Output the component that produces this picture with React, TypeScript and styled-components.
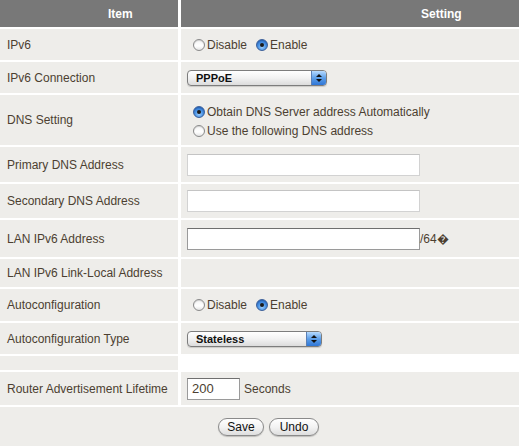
import React, { useState } from 'react';
import styled, { createGlobalStyle } from 'styled-components';

const GlobalStyle = createGlobalStyle`
  html, body {
    margin: 0;
    padding: 0;
    background: #fff;
  }
  body {
    font-family: "Liberation Sans", Arial, sans-serif;
    font-size: 12px;
    color: #4c3f31;
  }
`;

const Table = styled.div`
  display: grid;
  grid-template-columns: 178px 1fr;
  column-gap: 3px;
  row-gap: 2px;
  width: 519px;
  height: 446px;
  overflow: hidden;
  background: #fff;
`;

const HeadCell = styled.div<{ $pad: number }>`
  height: 27px;
  background: #787878;
  color: #fff;
  font-weight: bold;
  font-size: 12px;
  display: flex;
  align-items: center;
  padding-left: ${(p) => p.$pad}px;
`;

const Label = styled.div<{ $h: number }>`
  height: ${(p) => p.$h}px;
  background: #eeedea;
  display: flex;
  align-items: center;
  padding-left: 7px;
  white-space: nowrap;
`;

const Value = styled.div<{ $h: number; $blank?: boolean }>`
  height: ${(p) => p.$h}px;
  background: ${(p) => (p.$blank ? '#fff' : '#eeedea')};
  display: flex;
  align-items: center;
  padding-left: 6px;
  white-space: nowrap;
`;

const Stack = styled.div`
  display: flex;
  flex-direction: column;
  gap: 5px;
  margin-top: 2px;
`;

const RadioLabel = styled.label`
  display: inline-flex;
  align-items: center;
  margin-left: 6px;
  margin-right: 3px;
  cursor: default;
`;

const RadioDot = styled.span<{ $on: boolean }>`
  width: 12px;
  height: 12px;
  border-radius: 50%;
  box-sizing: border-box;
  margin-right: 2px;
  position: relative;
  border: 1px solid ${(p) => (p.$on ? '#3a5f9a' : '#8a8a8a')};
  background: ${(p) =>
    p.$on
      ? 'radial-gradient(circle at 50% 70%, #9fd0ff 0%, #4a93e4 45%, #1c5cc0 100%)'
      : 'linear-gradient(#f4f4f4, #ffffff 60%, #e4e4e4)'};
  box-shadow: inset 0 1px 1px rgba(0, 0, 0, 0.15);

  &::after {
    content: '';
    display: ${(p) => (p.$on ? 'block' : 'none')};
    position: absolute;
    left: 50%;
    top: 50%;
    width: 4px;
    height: 4px;
    margin: -2px 0 0 -2px;
    border-radius: 50%;
    background: #1a1a1a;
  }
`;

const Popup = styled.div<{ $w: number }>`
  width: ${(p) => p.$w}px;
  height: 16px;
  box-sizing: border-box;
  border: 1px solid #7d7d7d;
  border-radius: 4px;
  background: linear-gradient(#ffffff, #f2f2f2 50%, #dcdcdc);
  display: flex;
  align-items: center;
  overflow: hidden;
  box-shadow: 0 1px 1px rgba(0, 0, 0, 0.15);
`;

const PopupText = styled.span`
  flex: 1;
  padding-left: 8px;
  font-size: 11px;
  font-weight: bold;
  color: #111;
`;

const PopupCap = styled.span`
  width: 14px;
  height: 100%;
  border-left: 1px solid #5a7fb5;
  background: linear-gradient(#b7dbff, #5c9ee8 50%, #2f76d6);
  display: flex;
  flex-direction: column;
  align-items: center;
  justify-content: center;
  gap: 2px;
`;

const TextInput = styled.input<{ $w: number; $dark?: boolean }>`
  width: ${(p) => p.$w}px;
  height: 22px;
  box-sizing: border-box;
  margin: 0;
  padding: 2px 4px;
  font-family: "Liberation Sans", Arial, sans-serif;
  font-size: 13px;
  color: #4c3f31;
  background: #fff;
  border: 1px solid ${(p) => (p.$dark ? '#9a9a9a' : '#d2d2d2')};
  border-top-color: ${(p) => (p.$dark ? '#6f6f6f' : '#c4c4c4')};
  outline: none;
`;

const Suffix = styled.span<{ $gap: number }>`
  margin-left: ${(p) => p.$gap}px;
`;

const ButtonRow = styled.div`
  grid-column: 1 / span 2;
  height: 39px;
  background: #eeedea;
  display: flex;
  align-items: center;
  padding-left: 218px;
  gap: 5px;
`;

const PillButton = styled.button<{ $w: number }>`
  width: ${(p) => p.$w}px;
  height: 18px;
  box-sizing: border-box;
  padding: 0;
  border: 1px solid #8a8a8a;
  border-radius: 9px;
  background: linear-gradient(#ffffff, #f3f3f3 50%, #dedede);
  font-family: "Liberation Sans", Arial, sans-serif;
  font-size: 12px;
  color: #111;
  box-shadow: 0 1px 1px rgba(0, 0, 0, 0.2);
  cursor: pointer;
  margin-top: 1px;
`;

const Radio = ({ on, text, onClick }: { on: boolean; text: string; onClick: () => void }) => (
  <RadioLabel onClick={onClick}>
    <RadioDot $on={on} />
    {text}
  </RadioLabel>
);

const Select = ({ w, text }: { w: number; text: string }) => (
  <Popup $w={w}>
    <PopupText>{text}</PopupText>
    <PopupCap>
      <svg width="6" height="3" viewBox="0 0 6 3">
        <path d="M0 3 L3 0 L6 3 Z" fill="#111" />
      </svg>
      <svg width="6" height="3" viewBox="0 0 6 3">
        <path d="M0 0 L3 3 L6 0 Z" fill="#111" />
      </svg>
    </PopupCap>
  </Popup>
);

const App: React.FC = () => {
  const [ipv6, setIpv6] = useState(true);
  const [autoDns, setAutoDns] = useState(true);
  const [autoConf, setAutoConf] = useState(true);
  const [lifetime, setLifetime] = useState('200');

  return (
    <>
      <GlobalStyle />
      <Table>
        <HeadCell $pad={108}>Item</HeadCell>
        <HeadCell $pad={240}>Setting</HeadCell>

        <Label $h={31}>IPv6</Label>
        <Value $h={31}>
          <Radio on={!ipv6} text="Disable" onClick={() => setIpv6(false)} />
          <Radio on={ipv6} text="Enable" onClick={() => setIpv6(true)} />
        </Value>

        <Label $h={31}>IPv6 Connection</Label>
        <Value $h={31}>
          <Select w={140} text="PPPoE" />
        </Value>

        <Label $h={50}>DNS Setting</Label>
        <Value $h={50}>
          <Stack>
            <Radio on={autoDns} text="Obtain DNS Server address Automatically" onClick={() => setAutoDns(true)} />
            <Radio on={!autoDns} text="Use the following DNS address" onClick={() => setAutoDns(false)} />
          </Stack>
        </Value>

        <Label $h={35}>Primary DNS Address</Label>
        <Value $h={35}>
          <TextInput $w={233} />
        </Value>

        <Label $h={34}>Secondary DNS Address</Label>
        <Value $h={34}>
          <TextInput $w={233} />
        </Value>

        <Label $h={37}>LAN IPv6 Address</Label>
        <Value $h={37}>
          <TextInput $w={233} $dark />
          <Suffix $gap={0}>/64�</Suffix>
        </Value>

        <Label $h={28}>LAN IPv6 Link-Local Address</Label>
        <Value $h={28} />

        <Label $h={32}>Autoconfiguration</Label>
        <Value $h={32}>
          <Radio on={!autoConf} text="Disable" onClick={() => setAutoConf(false)} />
          <Radio on={autoConf} text="Enable" onClick={() => setAutoConf(true)} />
        </Value>

        <Label $h={31}>Autoconfiguration Type</Label>
        <Value $h={31}>
          <Select w={135} text="Stateless" />
        </Value>

        <Label $h={14} />
        <Value $h={14} $blank />

        <Label $h={33}>Router Advertisement Lifetime</Label>
        <Value $h={33}>
          <TextInput $w={53} $dark value={lifetime} onChange={(e) => setLifetime(e.target.value)} />
          <Suffix $gap={4}>Seconds</Suffix>
        </Value>

        <ButtonRow>
          <PillButton $w={46}>Save</PillButton>
          <PillButton $w={50}>Undo</PillButton>
        </ButtonRow>
      </Table>
    </>
  );
};

export default App;
